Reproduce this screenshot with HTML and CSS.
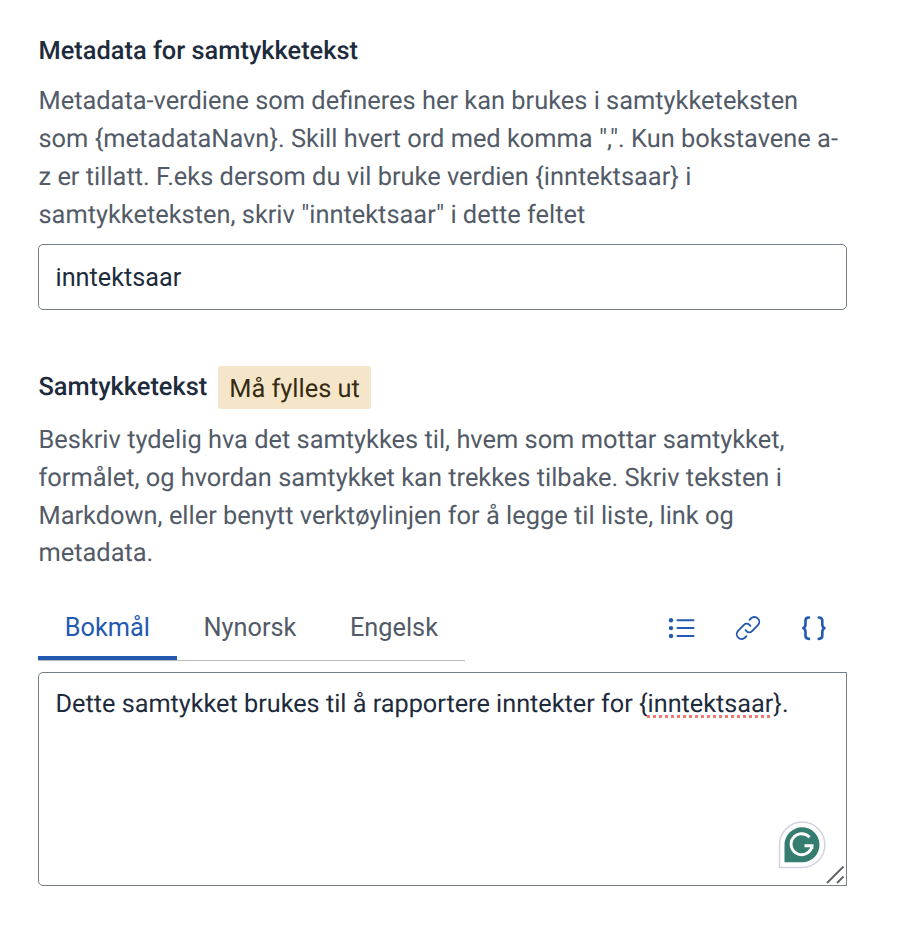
FILE: index.html
```html
<!DOCTYPE html>
<html lang="nb">
<head>
<meta charset="utf-8">
<title>Samtykke</title>
<link rel="stylesheet" href="styles.css">
</head>
<body>
<main class="form">
  <section class="field">
    <label class="label" for="meta">Metadata for samtykketekst</label>
    <p class="description">Metadata-verdiene som defineres her kan brukes i samtykketeksten<br>som {metadataNavn}. Skill hvert ord med komma ",". Kun bokstavene a-<br>z er tillatt. F.eks dersom du vil bruke verdien {inntektsaar} i<br>samtykketeksten, skriv "inntektsaar" i dette feltet</p>
    <input class="input" id="meta" type="text" value="inntektsaar">
  </section>
  <section class="field consent">
    <div class="heading"><span class="label">Samtykketekst</span><span class="tag">Må fylles ut</span></div>
    <p class="description">Beskriv tydelig hva det samtykkes til, hvem som mottar samtykket,<br>formålet, og hvordan samtykket kan trekkes tilbake. Skriv teksten i<br>Markdown, eller benytt verktøylinjen for å legge til liste, link og<br>metadata.</p>
    <div class="bar">
      <div class="tabs">
        <button class="tab active">Bokmål</button>
        <button class="tab">Nynorsk</button>
        <button class="tab">Engelsk</button>
      </div>
      <div class="tools">
        <svg class="icon" viewBox="0 0 32 32" fill="none" stroke="currentColor" stroke-width="2" stroke-linecap="round"><path d="M11.500 8.300h16M11.500 16.100h16M11.500 24h16"/><g fill="currentColor" stroke="none"><circle cx="5" cy="8.300" r="2.200"/><circle cx="5" cy="16.100" r="2.200"/><circle cx="5" cy="24" r="2.200"/></g></svg>
        <svg class="icon" viewBox="0 0 32 32" fill="none" stroke="currentColor" stroke-width="1.900" stroke-linecap="round" stroke-linejoin="round"><path d="M17.600 7.800l1.300-1.300a4.700 4.700 0 0 1 7 6.700l-6.100 6.100a3.600 3.600 0 0 1-5.100 0l-1.100-1.200M14.400 24.200l-1.300 1.300a4.700 4.700 0 0 1-7-6.700l6.100-6.100a3.600 3.600 0 0 1 5.100 0l1.100 1.200"/></svg>
        <svg class="icon" viewBox="0 0 32 32" fill="none" stroke="currentColor" stroke-width="2.600" stroke-linecap="round" stroke-linejoin="round"><path d="M11 5.500c-2.700 0-3.500 1-3.500 3.300v3.600c0 1.800-.7 3-2.200 3.800 1.500.8 2.200 2 2.200 3.800v3.600c0 2.300.8 3.300 3.500 3.300M20.800 5.500c2.700 0 3.500 1 3.500 3.300v3.600c0 1.800.7 3 2.200 3.800-1.500.8-2.200 2-2.200 3.800v3.600c0 2.300-.8 3.300-3.500 3.300"/></svg>
      </div>
    </div>
    <div class="editor">
      <div class="text">Dette samtykket brukes til å rapportere inntekter for {<span class="misspelled">inntektsaar</span>}.</div>
      <svg class="assistant" viewBox="0 0 48 48"><path d="M1.500 46.500V24A22.700 22.700 0 1 1 24.200 46.500z" fill="#fff" stroke="#d3d3e0" stroke-width="1.500"/><path d="M6.500 41.300V24A17.500 17.500 0 1 1 24 41.300z" fill="#347d6f"/><path d="M31.500 16.300A10.500 10.500 0 1 0 34 24.800h-7.500M34 24.800v3" fill="none" stroke="#fff" stroke-width="2.900"/></svg>
      <svg class="resize" viewBox="0 0 20 20"><path d="M1 18 17.500 1.500M11 18l6.500-6.500" stroke="#606060" stroke-width="1.800"/></svg>
    </div>
  </section>
</main>
</body>
</html>
```
FILE: styles.css
```css
* { box-sizing: border-box; }
body { margin: 0; background: #fff; color: #1e2b3c; font: 25.4px/38px Roboto, sans-serif; text-rendering: geometricPrecision; -webkit-font-smoothing: antialiased; }
.form { width: 809px; margin-left: 38px; padding-top: 32px; }
.label { display: block; padding-left: .5px; font-weight: 500; }
.description { margin: 12px 0 10px; padding-left: .5px; color: #525b67; white-space: nowrap; }
.input { display: block; width: 100%; height: 66px; padding: 0 16.5px; border: 1px solid #757e89; border-radius: 5px; color: inherit; font: inherit; font-size: 25.25px; }
.consent { margin-top: 56px; }
.consent .description { margin: 13px 0 22px; line-height: 37.75px; }
.heading { display: flex; gap: 10.5px; height: 43px; }
.heading .label { line-height: 42px; }
.tag { height: 43px; padding: 0 11.500px; border-radius: 3px; background: #f5e6ca; color: #352a12; line-height: 46px; }
.bar { display: flex; justify-content: space-between; height: 66px; }
.tabs { display: flex; width: 427px; border-bottom: 1px solid #b8bdc3; }
.tab { padding: 5px 26.800px 0; border: 0; border-bottom: 4px solid transparent; background: none; color: #525b67; font: inherit; font-size: 25.3px; white-space: nowrap; }
.active { border-bottom-color: #2459b0; color: #2459b0; }
.tools { display: flex; gap: 34px; align-items: center; padding: 0 17px 1px 0; color: #2459b0; }
.icon { width: 32px; height: 32px; }
.editor { position: relative; height: 214px; margin-top: 11px; padding: 13px 16.5px; border: 1px solid #757e89; border-radius: 5px 0 0 5px; font-size: 25.25px; white-space: nowrap; }
.misspelled { text-decoration: underline dotted #f07870 3px; text-underline-offset: 3px; text-decoration-skip-ink: none; }
.assistant { position: absolute; right: 20.500px; bottom: 16px; width: 48px; height: 48px; }
.resize { position: absolute; right: 0; bottom: 0; width: 20px; height: 20px; }
```
